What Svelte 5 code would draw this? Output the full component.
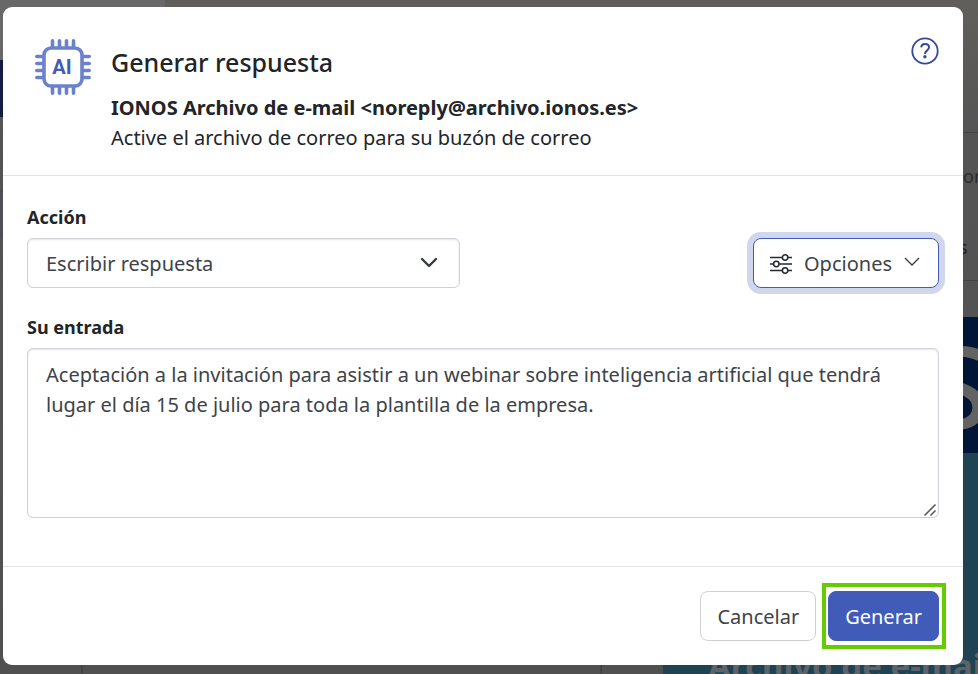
<script>
  let action = $state('reply');
  let prompt = $state(
    'Aceptación a la invitación para asistir a un webinar sobre inteligencia artificial que tendrá lugar el día 15 de julio para toda la plantilla de la empresa.'
  );

  const pins = [17, 24, 31, 38];
</script>

<div class="page">
  <div class="backdrop" aria-hidden="true">
    <div class="top-left"></div>
    <div class="nav"></div>
    <div class="side"></div>
    <div class="rule upper"></div>
    <div class="rule lower"></div>
    <div class="column first"></div>
    <div class="column second"></div>
    <span class="peek one">on</span>
    <span class="peek two">s</span>
    <div class="banner"><span class="mark">S</span></div>
    <div class="mail"><span class="mail-title">Archivo de e-mail</span></div>
  </div>

  <div class="modal" role="dialog" aria-modal="true" aria-labelledby="title">
    <header>
      <svg class="chip" viewBox="0 0 56 56" width="56" height="56" aria-hidden="true">
        <g fill="none" stroke="#6b81cd" stroke-width="3.6" stroke-linecap="round">
          <rect x="9" y="9" width="38" height="38" rx="7" />
          {#each pins as p}
            <path d="M{p + 0.5} 1.8V8M{p + 0.5} 48v6.2M1.8 {p + 0.5}H8M48 {p + 0.5}h6.2" />
          {/each}
        </g>
        <text x="27" y="35" text-anchor="middle">AI</text>
      </svg>
      <div class="heading">
        <h1 id="title">Generar respuesta</h1>
        <p class="sender">IONOS Archivo de e-mail &lt;noreply@archivo.ionos.es&gt;</p>
        <p>Active el archivo de correo para su buzón de correo</p>
      </div>
      <button class="help" type="button" aria-label="Ayuda">
        <svg viewBox="0 0 28 28" width="28" height="28" fill="none" stroke="#35499c">
          <circle cx="14" cy="14" r="12.7" stroke-width="1.8" />
          <path d="M10.2 10.4C10.4 8 11.9 6.9 14 6.9c2.3 0 4 1.2 4 3.3 0 1.7-.9 2.5-2.1 3.4-1.3 1-1.9 1.6-1.9 3.3" stroke-width="2" />
          <circle cx="13.9" cy="19.7" r="1.7" fill="#35499c" stroke="none" />
        </svg>
      </button>
    </header>

    <div class="body">
      <label for="action">Acción</label>
      <div class="row">
        <div class="select">
          <select id="action" bind:value={action}>
            <option value="reply">Escribir respuesta</option>
          </select>
          <svg viewBox="0 0 18 12" width="18" height="12" aria-hidden="true">
            <path d="M2 2l7 7 7-7" fill="none" stroke="#343a40" stroke-width="2.4" stroke-linecap="round" stroke-linejoin="round" />
          </svg>
        </div>
        <button class="btn options" type="button">
          <svg viewBox="0 0 22 22" width="22" height="22" fill="none" stroke="#25292d" stroke-width="1.5" aria-hidden="true">
            <path d="M0 4.5h12.2M18 4.5h4M0 11h3.4M9.2 11H22M0 17.5h12.2M18 17.5h4" />
            <circle cx="15.1" cy="4.5" r="2.7" />
            <circle cx="6.3" cy="11" r="2.7" />
            <circle cx="15.1" cy="17.5" r="2.7" />
          </svg>
          <span>Opciones</span>
          <svg class="caret" viewBox="0 0 16 10" width="16" height="10" aria-hidden="true">
            <path d="M1 1l7 7 7-7" fill="none" stroke="#343a40" stroke-width="1.3" />
          </svg>
        </button>
      </div>

      <label for="prompt">Su entrada</label>
      <div class="entry">
        <textarea id="prompt" rows="5" bind:value={prompt}></textarea>
        <svg class="grip" viewBox="0 0 14 14" width="14" height="14" aria-hidden="true">
          <path d="M1.5 12.5l11-11M7.5 12.5l5-5" stroke="#555" stroke-width="1.5" />
        </svg>
      </div>
    </div>

    <footer>
      <button class="btn" type="button">Cancelar</button>
      <div class="highlight">
        <button class="btn primary" type="button">Generar</button>
      </div>
    </footer>
  </div>
</div>

<style>
  :global(body) {
    margin: 0;
    background: #555;
  }
  .page {
    position: relative;
    box-sizing: border-box;
    min-height: 100vh;
    padding: 7px 15px 9px 3px;
    overflow: hidden;
    font-family: 'Segoe UI', 'Noto Sans', 'Open Sans', sans-serif;
    font-size: 20px;
    line-height: 30px;
    color: #212529;
  }

  /* dimmed mailbox behind the dialog */
  .backdrop,
  .backdrop > * {
    position: absolute;
  }
  .backdrop {
    inset: 0;
    background: linear-gradient(#605f5c, #545454 20%, #505050);
  }
  .top-left {
    top: 0;
    left: 0;
    width: 165px;
    height: 60px;
    background: #686868;
  }
  .nav {
    top: 60px;
    left: 0;
    width: 20px;
    height: 57px;
    background: #141c46;
  }
  .side {
    top: 189px;
    left: 0;
    width: 20px;
    height: 48px;
    background: #4e4e57;
  }
  .rule {
    right: 0;
    width: 30px;
    height: 1px;
    background: #424242;
  }
  .upper {
    top: 132px;
  }
  .lower {
    top: 280px;
  }
  .column {
    bottom: 0;
    width: 2px;
    height: 20px;
    background: #444;
  }
  .first {
    left: 81px;
  }
  .second {
    left: 600px;
  }
  .peek {
    left: calc(100% - 15px);
    color: #2c2c29;
    font-size: 18px;
  }
  .one {
    top: 161px;
  }
  .two {
    top: 232px;
    left: calc(100% - 19px);
    color: #1f1f1f;
  }
  .banner {
    top: 317px;
    right: 0;
    width: 100px;
    height: 136px;
    overflow: hidden;
    background: #011536;
  }
  .mark {
    position: absolute;
    left: 49px;
    top: 0;
    color: #636363;
    font-size: 114px;
    font-weight: 500;
    line-height: 136px;
  }
  .mail {
    top: 453px;
    right: 0;
    bottom: 0;
    width: 315px;
    overflow: hidden;
    background: #1f4353;
  }
  .mail-title {
    position: absolute;
    left: 45px;
    top: 198px;
    color: #5c6469;
    font-size: 33px;
    font-weight: 700;
    white-space: nowrap;
  }

  .modal {
    position: relative;
    background: #fff;
    border-radius: 9px;
  }
  header {
    display: flex;
    align-items: flex-start;
    gap: 20px;
    padding: 32px 24px 22px 32px;
    border-bottom: 1px solid #e3e3e3;
  }
  .chip text {
    fill: #415cb8;
    font-family: Roboto, sans-serif;
    font-size: 20px;
    font-weight: 700;
  }
  .heading {
    flex: 1;
  }
  h1 {
    margin: 7px 0 15px;
    font-size: 25px;
    font-weight: 500;
    line-height: 32px;
  }
  p {
    margin: 0;
  }
  .sender {
    font-weight: 700;
  }
  .help {
    margin-top: -2px;
    padding: 0;
    border: 0;
    background: none;
    line-height: 0;
  }

  .body {
    padding: 26px 24px 48px;
  }
  label {
    display: block;
    margin-bottom: 6px;
    font-size: 18px;
    font-weight: 700;
    line-height: 30px;
  }
  .row {
    display: flex;
    justify-content: space-between;
    margin-bottom: 24px;
  }
  .select {
    position: relative;
    flex: 0 1 433px;
  }
  .select svg {
    position: absolute;
    top: 19px;
    right: 22px;
    pointer-events: none;
  }
  select,
  textarea {
    display: block;
    box-sizing: border-box;
    width: 100%;
    border: 1px solid #ced0db;
    border-radius: 6px;
    background: #fff;
    box-shadow: inset 0 1px 2px rgba(0, 0, 0, 0.1);
    color: #3d4349;
    font: inherit;
  }
  select {
    height: 50px;
    padding: 2px 44px 0 18px;
    appearance: none;
  }
  .entry {
    position: relative;
  }
  textarea {
    height: 170px;
    padding: 11px 18px;
    resize: vertical;
  }
  textarea::-webkit-resizer {
    background: transparent;
  }
  .grip {
    position: absolute;
    right: 2px;
    bottom: 1px;
    pointer-events: none;
  }

  .btn {
    display: flex;
    align-items: center;
    gap: 12px;
    box-sizing: border-box;
    height: 50px;
    padding: 2px 16px 0;
    border: 1px solid #ced0db;
    border-radius: 8px;
    background: #fff;
    color: #3d4349;
    font: inherit;
  }
  .options {
    border-color: #415cb8;
    box-shadow: 0 0 0 6px #d0d6ed;
  }
  .caret {
    margin: 0 2px 4px 0;
  }
  .primary {
    border-color: #415cb8;
    background: #415cb8;
    color: #fff;
  }
  footer {
    display: flex;
    align-items: center;
    justify-content: flex-end;
    gap: 6px;
    padding: 16px 17px;
    border-top: 1px solid #e3e3e3;
  }
  .highlight {
    padding: 4px 3px 4px 2px;
    border: 4px solid #66cc00;
  }
</style>
